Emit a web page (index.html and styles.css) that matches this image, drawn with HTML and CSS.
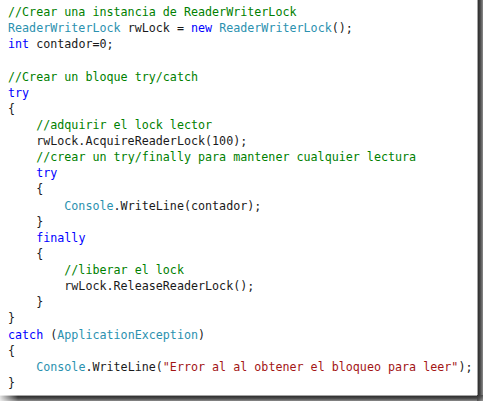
FILE: index.html
```html
<!DOCTYPE html>
<html lang="es">
<head>
    <meta charset="UTF-8">
    <title>ReaderWriterLock</title>
    <link rel="stylesheet" href="styles.css">
</head>
<body>
    <div class="shot">
        <pre class="code"><span class="cm">//Crear una instancia de ReaderWriterLock</span>
<span class="ty">ReaderWriterLock</span> rwLock = <span class="kw">new</span> <span class="ty">ReaderWriterLock</span>();
<span class="kw">int</span> contador=0;

<span class="cm">//Crear un bloque try/catch</span>
<span class="kw">try</span>
{
    <span class="cm">//adquirir el lock lector</span>
    rwLock.AcquireReaderLock(100);
    <span class="cm">//crear un try/finally para mantener cualquier lectura</span>
    <span class="kw">try</span>
    {
        <span class="ty">Console</span>.WriteLine(contador);
    }
    <span class="kw">finally</span>
    {
        <span class="cm">//liberar el lock</span>
        rwLock.ReleaseReaderLock();
    }
}
<span class="kw">catch</span> (<span class="ty">ApplicationException</span>)
{
    <span class="ty">Console</span>.WriteLine(<span class="st">"Error al al obtener el bloqueo para leer"</span>);
}</pre>
        <div class="shadow-right"></div>
        <div class="shadow-bottom"></div>
        <div class="shadow-corner"></div>
    </div>
</body>
</html>
```

FILE: styles.css
```css
body {
    margin: 0;
    background-color: #fff;
}

/* Marco de la captura con sombra */
.shot {
    display: grid;
    grid-template-columns: 477px 6px;
    grid-template-rows: 395px 6px;
    width: 483px;
    height: 401px;
}

.code {
    margin: 0;
    padding: 4px 0 0 8px;
    background-color: #fff;
    font-family: "DejaVu Sans Mono", monospace;
    font-size: 11.7px;
    line-height: 16.13px;
    color: #1a1a1a;
    overflow: hidden;
}

.cm { color: #008000; }
.kw { color: #0000ff; }
.ty { color: #2b91af; }
.st { color: #a31515; }

.shadow-right {
    background: linear-gradient(to right, #a5a5a5 0, #a5a5a5 1px, #2e2e2e 1px, #4a4a4a 55%, #8c8c8c 100%);
}

.shadow-bottom {
    background:
        linear-gradient(to right, rgba(255,255,255,0.85) 0, rgba(255,255,255,0) 18px),
        linear-gradient(to bottom, #a5a5a5 0, #a5a5a5 1px, #2e2e2e 1px, #4a4a4a 55%, #8c8c8c 100%);
}

.shadow-corner {
    background: linear-gradient(135deg, #2e2e2e 0, #555 50%, #999 100%);
}
```
